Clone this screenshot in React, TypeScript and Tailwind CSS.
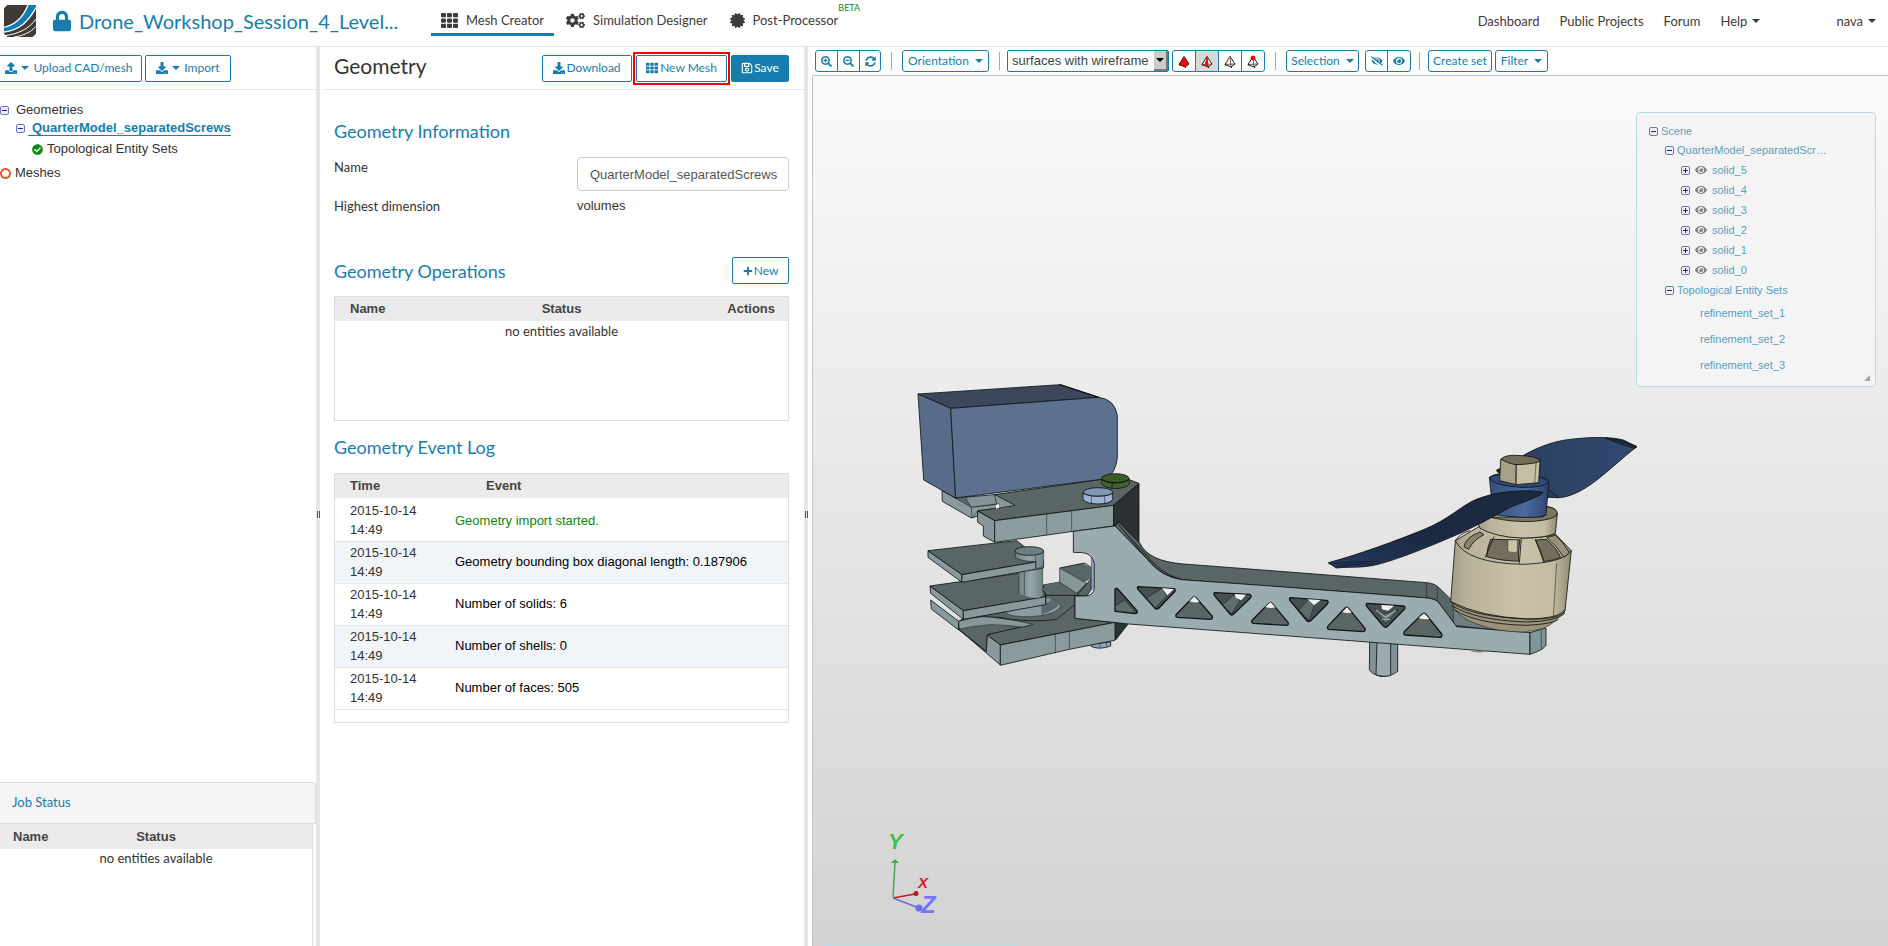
import type { ReactNode } from "react";
import {
  FaCertificate,
  FaCheckCircle,
  FaCogs,
  FaDownload,
  FaEye,
  FaEyeSlash,
  FaLock,
  FaPlus,
  FaRegSave,
  FaSearchMinus,
  FaSearchPlus,
  FaSyncAlt,
  FaTh,
  FaUpload,
} from "react-icons/fa";

const LATO = "font-[Lato,sans-serif]";
const ARIAL = "font-['Liberation_Sans',Arial,sans-serif]";

const EVENTS = [
  { date: "2015-10-14", time: "14:49", text: "Geometry import started.", ok: true },
  { date: "2015-10-14", time: "14:49", text: "Geometry bounding box diagonal length: 0.187906" },
  { date: "2015-10-14", time: "14:49", text: "Number of solids: 6" },
  { date: "2015-10-14", time: "14:49", text: "Number of shells: 0" },
  { date: "2015-10-14", time: "14:49", text: "Number of faces: 505" },
];

const SOLIDS = ["solid_5", "solid_4", "solid_3", "solid_2", "solid_1", "solid_0"];
const SETS = ["refinement_set_1", "refinement_set_2", "refinement_set_3"];

function Caret() {
  return <span className="inline-block border-x-4 border-t-4 border-x-transparent border-t-current" />;
}

function Button({ children, className = "" }: { children: ReactNode; className?: string }) {
  return (
    <button
      type="button"
      className={`flex h-[27px] items-center justify-center rounded-xs border border-[#177dae] text-[12px] whitespace-nowrap ${className}`}
    >
      {children}
    </button>
  );
}

function ToolButton({ children, className = "" }: { children: ReactNode; className?: string }) {
  return (
    <button
      type="button"
      className={`flex h-[22px] items-center justify-center gap-[6px] rounded-[3px] border border-[#177dae] bg-white text-[12px] whitespace-nowrap text-[#177dae] ${className}`}
    >
      {children}
    </button>
  );
}

function ToolGroup({ children }: { children: ReactNode }) {
  return (
    <div className="flex h-[22px] divide-x divide-[#177dae] overflow-hidden rounded-[3px] border border-[#177dae] text-[#177dae]">
      {children}
    </div>
  );
}

function Divider() {
  return <span className="h-[18px] w-px bg-[#b9a58c]" />;
}

function Splitter() {
  return (
    <div className="flex w-1 shrink-0 items-center justify-center bg-[#e6e6e6] pt-9">
      <span className="h-[7px] w-[3px] border-x border-[#555]" />
    </div>
  );
}

function Toggle({ open }: { open?: boolean }) {
  return (
    <svg width="9" height="9" viewBox="0 0 9 9" className="shrink-0">
      <rect x=".5" y=".5" width="8" height="8" rx="1.5" fill="#f1f2fb" stroke="#6b76b5" />
      <path d={open ? "M2 4.5h5" : "M2 4.5h5M4.5 2v5"} stroke="#1c1cc0" />
    </svg>
  );
}

function Logo() {
  return (
    <svg width="32" height="32" viewBox="0 0 96 96" className="shrink-0">
      <path d="M10 0H86L96 10V86L86 96H10L0 86V10Z" fill="#3f3a36" />
      <path d="M0 68C34 60 62 36 74 0H96V6C72 50 44 74 0 80Z" fill="#0a7cb8" />
      <path d="M0 67C32 60 58 36 72 0" fill="none" stroke="#fff" strokeWidth="4" />
      <path d="M0 81C44 76 72 52 96 8" fill="none" stroke="#fff" strokeWidth="4" />
      <path d="M0 92C44 88 76 70 96 42" fill="none" stroke="#fff" strokeWidth="3" />
      <path d="M30 96C58 92 80 82 96 64" fill="none" stroke="#fff" strokeWidth="3" />
    </svg>
  );
}

function Tetra({ mode }: { mode: "volume" | "face" | "edge" | "node" }) {
  return (
    <svg width="12" height="13" viewBox="0 0 12 13" fill="none" stroke="#222" strokeLinejoin="round">
      <path d="M6 1.5L1 9.5L7 12L11 9Z" fill={mode === "volume" ? "#f00" : "#fff"} />
      {mode !== "volume" && <path d="M6 1.5L7 12M1 9.5L11 9" strokeWidth=".7" />}
      {mode === "volume" && <path d="M6 3L3 9L7 11L10 9Z" fill="#f00" stroke="#f00" />}
      {mode === "face" && <path d="M6 3L4 10L7 11.500Z" fill="#f00" stroke="#f00" />}
      {mode === "edge" && <path d="M6 2L2 9" stroke="#f66" />}
      {mode === "node" && <circle cx="6" cy="3" r="2" fill="#f00" stroke="#f00" />}
      <path d="M1 9.5h1M7 12h1" strokeWidth="2" />
    </svg>
  );
}

function Header() {
  return (
    <header className="flex h-[47px] shrink-0 items-start border-b border-[#e6e6e6] pr-3 pl-1 text-[#3f3b39]">
      <div className="flex w-[427px] items-center pt-[5px] text-[#177dae]">
        <Logo />
        <FaLock className="ml-[17px] h-[22px] w-[18px]" />
        <h1 className="ml-2 text-[20px] leading-[32px]">Drone_Workshop_Session_4_Level...</h1>
      </div>
      <nav className="flex text-[13px]">
        <a href="#mesh" className="flex h-9 items-center gap-2 border-b-3 border-[#177dae] px-[10px] pt-2">
          <FaTh className="size-[17px]" />
          Mesh Creator
        </a>
        <a href="#simulation" className="flex h-9 items-center gap-2 border-b-3 border-transparent px-3 pt-2">
          <FaCogs className="size-[19px]" />
          Simulation Designer
        </a>
        <a href="#post" className="flex h-9 items-center gap-2 border-b-3 border-transparent pt-2 pl-[10px]">
          <FaCertificate className="size-[15px]" />
          Post-Processor
        </a>
        <sup className="top-0 pt-[2px] text-[9px] leading-3 text-[#0a8a0a]">BETA</sup>
      </nav>
      <nav className="ml-auto flex items-center gap-5 pt-3 text-[13px] leading-[18px]">
        <a href="#dashboard">Dashboard</a>
        <a href="#projects">Public Projects</a>
        <a href="#forum">Forum</a>
        <button type="button" className="flex items-center gap-[5px]">
          Help <Caret />
        </button>
        <button type="button" className="ml-14 flex items-center gap-[5px]">
          nava <Caret />
        </button>
      </nav>
    </header>
  );
}

function Sidebar() {
  return (
    <aside className="flex w-[316px] shrink-0 flex-col">
      <div className="flex h-[43px] shrink-0 items-center gap-[3px] overflow-hidden border-b border-[#e6e6e6] text-[#177dae]">
        <Button className="-ml-1 w-[146px] gap-1">
          <FaUpload className="size-3" />
          <Caret /> Upload CAD/mesh
        </Button>
        <Button className="w-[86px] gap-1">
          <FaDownload className="size-3" />
          <Caret /> Import
        </Button>
      </div>
      <ul className={`grow pt-[11px] text-[13px] text-[#333] ${ARIAL}`}>
        <li>
          <div className="flex h-[18px] items-center gap-[7px]">
            <Toggle open /> Geometries
          </div>
          <ul className="pl-4">
            <li>
              <div className="flex h-[18px] items-center gap-[3px]">
                <Toggle open />
                <a href="#geometry" className="border-b border-[#177dae] pl-1 leading-[15px] font-bold text-[#177dae]">
                  QuarterModel_separatedScrews
                </a>
              </div>
              <div className="flex h-[24px] items-center gap-1 pl-4">
                <FaCheckCircle className="size-[11px] text-[#0b8a0b]" /> Topological Entity Sets
              </div>
            </li>
          </ul>
        </li>
        <li className="flex h-[24px] items-center gap-1">
          <span className="size-[11px] rounded-full border-2 border-[#e8562a]" /> Meshes
        </li>
      </ul>
      <section className="h-[164px] shrink-0">
        <h2 className="flex h-[42px] items-center rounded-tr border-t border-r border-b border-[#dcdcdc] bg-[#f5f5f5] pl-3 text-[13px] text-[#177dae]">
          Job Status
        </h2>
        <div className="mr-[3px] h-[122px] border-r border-[#dcdcdc]">
          <table className="w-full table-fixed text-[13px]">
            <thead className={`bg-[#ebebeb] text-[#444] ${ARIAL}`}>
              <tr className="h-[25px]">
                <th className="pl-[13px] text-left">Name</th>
                <th>Status</th>
                <th />
              </tr>
            </thead>
            <tbody>
              <tr>
                <td colSpan={3} className="text-center leading-[18px] text-[#333]">
                  no entities available
                </td>
              </tr>
            </tbody>
          </table>
        </div>
      </section>
    </aside>
  );
}

function Geometry() {
  return (
    <main className="w-[484px] shrink-0 text-[#333]">
      <div className="ml-1 flex h-[43px] items-center border-b border-[#e6e6e6] pr-[15px] pl-[10px]">
        <h2 className="mr-auto pb-1 text-[21px]">Geometry</h2>
        <div className="flex gap-1">
          <Button className="w-[90px] gap-px text-[#177dae]">
            <FaDownload className="size-3" /> Download
          </Button>
          <div className="outline-2 outline-offset-1 outline-[#f00]">
            <Button className="w-[91px] gap-0.5 text-[#177dae]">
              <FaTh className="size-3" /> New Mesh
            </Button>
          </div>
          <Button className="w-[58px] gap-px bg-[#177dae] text-white">
            <FaRegSave className="size-3" /> Save
          </Button>
        </div>
      </div>
      <div className="pr-[15px] pl-[14px]">
        <h3 className="pt-7 text-[18px] leading-[26px] text-[#177dae]">Geometry Information</h3>
        <div className="grid grid-cols-[243px_1fr] gap-y-[5px] pt-[13px] text-[13px] leading-[20px]">
          <label htmlFor="geometry-name">Name</label>
          <input
            id="geometry-name"
            defaultValue="QuarterModel_separatedScrews"
            className={`h-[34px] w-full rounded border border-[#ccc] pl-3 text-[#555] ${ARIAL}`}
          />
          <span>Highest dimension</span>
          <span className={ARIAL}>volumes</span>
        </div>
        <div className="flex items-center justify-between pt-[41px] text-[#177dae]">
          <h3 className="text-[18px] leading-[26px]">Geometry Operations</h3>
          <Button className="w-[57px] gap-px">
            <FaPlus className="size-[10px]" /> New
          </Button>
        </div>
        <div className="mt-3 h-[125px] border border-[#ddd]">
          <table className="w-full table-fixed text-[13px]">
            <thead className={`bg-[#ebebeb] text-[#444] ${ARIAL}`}>
              <tr className="h-6">
                <th className="pl-[15px] text-left">Name</th>
                <th>Status</th>
                <th className="pr-[13px] text-right">Actions</th>
              </tr>
            </thead>
            <tbody>
              <tr>
                <td colSpan={3} className="pt-px text-center leading-[18px]">
                  no entities available
                </td>
              </tr>
            </tbody>
          </table>
        </div>
        <h3 className="py-[13px] text-[18px] leading-[26px] text-[#177dae]">Geometry Event Log</h3>
        <div className="h-[250px] border border-[#ddd]">
          <table className={`w-full text-[13px] ${ARIAL}`}>
            <thead className="bg-[#ebebeb] text-[#444]">
              <tr className="h-[25px] border-b-2 border-white">
                <th className="w-[120px] pl-[15px] text-left">Time</th>
                <th className="pl-[31px] text-left">Event</th>
              </tr>
            </thead>
            <tbody>
              {EVENTS.map((e) => (
                <tr key={e.text} className="border-y border-[#e6e6e6] even:bg-[#f1f5fa]">
                  <td className="h-[42px] pl-[15px] leading-[19px]">
                    {e.date}
                    <br />
                    {e.time}
                  </td>
                  <td className={e.ok ? "text-[#0a8a0a]" : "text-black"}>{e.text}</td>
                </tr>
              ))}
            </tbody>
          </table>
        </div>
      </div>
    </main>
  );
}

function Toolbar() {
  return (
    <div className="flex h-7 items-center pl-[3px]">
      <ToolGroup>
        <button type="button" aria-label="Zoom in" className="flex w-[22px] items-center justify-center">
          <FaSearchPlus className="size-[11px]" />
        </button>
        <button type="button" aria-label="Zoom out" className="flex w-[22px] items-center justify-center">
          <FaSearchMinus className="size-[11px]" />
        </button>
        <button type="button" aria-label="Reset view" className="flex w-5 items-center justify-center">
          <FaSyncAlt className="size-[11px]" />
        </button>
      </ToolGroup>
      <div className="ml-[10px] flex items-center gap-[10px]">
        <Divider />
        <ToolButton className="w-[87px]">
          Orientation <Caret />
        </ToolButton>
        <Divider />
      </div>
      <div className="relative ml-[7px]">
        <select
          aria-label="Render mode"
          className={`block h-[22px] w-[162px] appearance-none rounded-xs border border-[#177dae] bg-white pl-1 text-[13px] text-[#444] ${ARIAL}`}
        >
          <option>surfaces with wireframe</option>
        </select>
        <span className="pointer-events-none absolute top-px right-px flex h-5 w-[14px] items-center justify-center border-r-2 border-b-2 border-[#777] bg-[#ccc] text-black">
          <Caret />
        </span>
      </div>
      <div className="ml-[3px] flex items-center gap-[10px]">
        <ToolGroup>
          <button type="button" aria-label="Pick volumes" className="flex w-[23px] items-center justify-center">
            <Tetra mode="volume" />
          </button>
          <button type="button" aria-label="Pick faces" className="flex w-[23px] items-center justify-center bg-[#d8d8d8]">
            <Tetra mode="face" />
          </button>
          <button type="button" aria-label="Pick edges" className="flex w-[23px] items-center justify-center">
            <Tetra mode="edge" />
          </button>
          <button type="button" aria-label="Pick nodes" className="flex w-[22px] items-center justify-center">
            <Tetra mode="node" />
          </button>
        </ToolGroup>
        <Divider />
        <ToolButton className="w-[73px]">
          Selection <Caret />
        </ToolButton>
      </div>
      <div className="ml-[6px] flex items-center gap-2">
        <ToolGroup>
          <button type="button" aria-label="Hide" className="flex w-[22px] items-center justify-center">
            <FaEyeSlash className="size-3" />
          </button>
          <button type="button" aria-label="Show" className="flex w-[22px] items-center justify-center">
            <FaEye className="size-3" />
          </button>
        </ToolGroup>
        <Divider />
        <div className="flex gap-[3px]">
          <ToolButton className="w-[64px]">Create set</ToolButton>
          <ToolButton className="w-[53px]">
            Filter <Caret />
          </ToolButton>
        </div>
      </div>
    </div>
  );
}

// truss cut-outs: outline, the lit inner wall and the see-through tip
const HOLES = [
  { d: "M645 657Q650 652 656 660L711 722Q714 731 705 731L645 724Z", inner: "M645 708L674 690L709 729L647 723Z" },
  { d: "M715 650L822 656Q829 659 823 666L776 715Q769 721 763 713L714 658Q710 650 715 650Z", gap: "M786 655L822 657L802 676Z", inner: "M786 655L800 678L766 714L740 684Z" },
  { d: "M878 683Q883 677 889 684L936 738Q940 747 932 748L832 742Q824 739 830 732Z", gap: "M868 694L883 679L898 695Q883 700 868 694Z" },
  { d: "M945 668L1049 673Q1057 677 1051 684L1000 733Q994 738 989 731L943 676Q940 668 945 668Z", gap: "M1004 672L1038 674L1024 691L1008 684Z", inner: "M1005 672L1020 693L994 732L968 704Z" },
  { d: "M1107 700Q1112 694 1117 701L1164 757Q1167 766 1159 766L1060 760Q1052 757 1057 750Z", gap: "M1096 711L1111 696L1126 712Q1111 716 1096 711Z" },
  { d: "M1172 683L1280 691Q1288 694 1282 702L1232 752Q1225 758 1219 750L1170 692Q1166 685 1172 683Z", gap: "M1222 688L1262 690L1242 706Z", inner: "M1224 690L1242 706L1228 752L1196 720Z" },
  { d: "M1335 714Q1340 708 1346 715L1395 775Q1398 783 1390 785L1286 778Q1279 774 1285 767Z", gap: "M1327 726L1341 712L1355 727Q1341 731 1327 726Z" },
  { d: "M1402 700L1510 708Q1519 711 1513 718L1463 769Q1457 775 1450 768L1400 709Q1396 702 1402 700Z", gap: "M1444 705L1482 707L1464 722L1446 718Z", inner: "M1426 716L1448 734L1482 722L1494 718L1457 762Z" },
  { d: "M1567 732Q1573 726 1578 733L1625 792Q1628 801 1620 802L1515 795Q1508 791 1514 784Z", gap: "M1556 744L1572 730L1588 746Q1572 750 1556 744Z" },
];

function Model() {
  return (
    <svg
      className="absolute inset-0 size-full"
      viewBox="813 76 1075 870"
      preserveAspectRatio="xMidYMid slice"
      role="img"
      aria-label="Quarter model of a drone arm"
    >
      <defs>
        <linearGradient id="can" x1="0" x2="1">
          <stop offset="0" stopColor="#a39c86" />
          <stop offset=".15" stopColor="#b9b199" />
          <stop offset=".55" stopColor="#c9c2a8" />
          <stop offset=".85" stopColor="#c3bca2" />
          <stop offset="1" stopColor="#8f8973" />
        </linearGradient>
        <linearGradient id="hub" x1="0" x2="1">
          <stop offset="0" stopColor="#33507f" />
          <stop offset=".6" stopColor="#4b6a9e" />
          <stop offset="1" stopColor="#2c4672" />
        </linearGradient>
        <linearGradient id="pin" x1="0" x2="1">
          <stop offset="0" stopColor="#6f8083" />
          <stop offset=".5" stopColor="#96a8ab" />
          <stop offset="1" stopColor="#6f8184" />
        </linearGradient>
        <linearGradient id="blade" x1="1" y1="0" x2="0" y2="1">
          <stop offset="0" stopColor="#1c2a41" />
          <stop offset=".6" stopColor="#1b2a43" />
          <stop offset="1" stopColor="#263b60" />
        </linearGradient>
        <linearGradient id="farblade" x1="0" x2="1">
          <stop offset="0" stopColor="#2b4060" />
          <stop offset="1" stopColor="#324a72" />
        </linearGradient>
      </defs>

      <g transform="translate(900 370) scale(.333333)" stroke="#101516" strokeWidth="2.5" strokeLinejoin="round">
        {/* lower plates */}
        <path d="M572 822L632 816V828Q600 840 575 830Z" fill="#8ba3c4" />
        <path d="M600 822V834M620 820V830" fill="none" strokeWidth="1.5" />
        <path d="M645 757L686 760L647 810Z" fill="#2b3233" />
        <path d="M92 690L176 754V780L94 717Z" fill="#8a9a9c" />
        <path d="M430 645L480 636L560 640L525 705L525 745L645 757L301 825L262 796L300 780L176 754L190 745L436 705Z" fill="#5a6566" />
        <path d="M176 754L250 740L290 742L394 764L262 794L260 845L176 778Z" fill="#5a6566" />
        <path d="M176 754Q215 742 250 740Q320 744 400 763L366 771Q300 764 270 764Q220 768 178 777Z" fill="#87979a" strokeWidth="1.5" />
        <path d="M290 741Q390 760 470 748L524 704" fill="none" />
        <path d="M314 726Q330 742 390 740Q470 736 483 708Q475 690 440 684L380 690Z" fill="#8a9c9f" stroke="none" />
        <path d="M314 726Q330 742 390 740Q470 736 483 708Q475 692 455 687" fill="none" strokeWidth="1.5" />
        <path d="M424 700Q450 698 455 686L480 700Q470 718 424 735Z" fill="#59696c" stroke="none" />
        <path d="M479 594L548 580L576 594V625L550 638L528 672L430 676L434 644L479 635Z" fill="#5a6566" stroke="none" />
        <path d="M479 594L554 579L576 594" fill="none" />
        <path d="M479 594L560 640L530 670L479 636Z" fill="#879799" strokeWidth="1.5" />
        <path d="M432 676H525V706" fill="none" />
        <path d="M530 676L574 626V658L560 678Z" fill="#5a6566" />
        <path d="M176 778L301 885V825L262 796L259 845Z" fill="#8a9a9c" />
        <path d="M301 825L645 757V811L508 838L301 886Z" fill="#8a9b9d" />
        <path d="M466 792V850M508 784V838" fill="none" strokeWidth="1.5" />

        {/* middle plates and pin */}
        <path d="M90 648L190 722V748L92 670Z" fill="#8a9a9c" />
        <path d="M90 648L356 610L436 668V681L190 722Z" fill="#5a6566" />
        <path d="M190 722L437 680V704L190 748Z" fill="#8a9a9c" />
        <path d="M354 600L428 590V664Q436 690 390 682L356 672Z" fill="url(#pin)" stroke="none" />
        <path d="M356 610V672M373 606V676M428 588V662M428 662Q440 672 437 700" fill="none" strokeWidth="1.5" />
        <path d="M84 542L186 614V637L84 562Z" fill="#8a9a9c" />
        <path d="M84 542L350 512L428 572L186 614Z" fill="#5a6566" />
        <path d="M186 614L430 572V594L186 637Z" fill="#8a9a9c" />
        <path d="M346 544V562Q360 574 408 575V598L431 588V542Z" fill="url(#pin)" strokeWidth="1.5" />
        <ellipse cx="388" cy="543" rx="43" ry="13" fill="#6c8083" />
        <path d="M407 556V596" strokeWidth="1.5" />

        {/* upper clamp */}
        <path d="M126 362L166 384L342 370L344 406L214 444L127 394Z" fill="#8a9a9c" />
        <path d="M166 384L200 380L214 412L290 402L300 372L344 406L284 452L233 423L214 412Z" fill="#5a6566" strokeWidth="1.5" />
        <path d="M200 382L284 374L290 402L214 412L200 390Z" fill="#849496" strokeWidth="1.5" />
        <path d="M214 412L286 404L288 416L234 422L216 444Z" fill="#8a9a9c" strokeWidth="1.5" />
        <path d="M284 374L604 328L690 330L717 340L641 406L284 452L233 423L344 406Z" fill="#5a6566" />
        <path d="M284 374L290 402L298 402V414L344 406Z" fill="#87979a" strokeWidth="1.5" />
        <path d="M286 405L298 402V413L288 416Z" fill="#eee" stroke="none" />
        <path d="M233 423L284 452V517L250 498V468L233 457Z" fill="#87979a" />
        <path d="M284 452L641 406V468L520 484L284 517Z" fill="#8c9da0" />
        <path d="M440 432V494M515 423V484" fill="none" strokeWidth="1.5" />
        <path d="M641 406L717 340V520L690 510L641 468Z" fill="#2b3132" />

        {/* battery */}
        <path d="M54 72L480 44L596 82L152 115Z" fill="#3c475b" />
        <path d="M54 72L152 115L167 384L71 330Z" fill="#596b8a" />
        <path d="M152 115L596 82Q644 88 652 136V262Q648 306 620 326L167 384Z" fill="#5c7090" />
        <path d="M480 44L596 82" strokeWidth="4" />
        <path d="M605 328V342Q615 354 646 356Q680 354 688 342V328Z" fill="#42632f" />
        <ellipse cx="646" cy="325" rx="41" ry="14" fill="#3a5a26" />
        <path d="M605 328Q620 338 650 338Q680 336 688 328M636 337V355" fill="none" />
        <path d="M549 368V388Q560 402 594 402Q630 402 638 388V368Z" fill="#9db4d6" />
        <ellipse cx="594" cy="366" rx="44" ry="13" fill="#8196b5" />
        <path d="M549 370Q565 378 594 378Q630 377 638 370M574 378V400M614 378V400" fill="none" strokeWidth="1.5" />

        {/* arm */}
        <path d="M645 468L656 456L720 520Q745 574 850 582L1140 604L1580 638Q1606 640 1620 656L1680 715L1800 780L1670 770L1614 695Q1600 684 1570 683L845 629Q790 618 760 588Z" fill="#5a6566" />
        <path d="M652 460Q690 505 735 548Q780 610 845 629L792 612Q760 595 740 568Z" fill="#3f4a4b" strokeWidth="1.5" />
        <path d="M1660 700V765L1800 782V740L1700 715Z" fill="#6f7e80" strokeWidth="1.5" />
        <path d="M1580 638V684M1612 652V692" fill="none" strokeWidth="1.5" />
        <path d="M1409 816L1493 820V904Q1470 922 1440 919Q1415 912 1408 900Z" fill="#7f9193" />
        <path d="M1431 816H1472V917Q1450 922 1428 915Z" fill="#9bacb0" />
        <path
          d="M520 484L645 468L740 566Q785 622 845 629L1140 650L1570 683Q1600 684 1614 695L1670 770L1890 788V853L1140 796L686 762L525 745V678H560Q580 675 583 655V580Q575 550 548 548L520 547Z"
          fill="#9bacb0"
        />
        <path d="M574 562Q580 570 580 582V655L574 660Z" fill="#8fa8cf" strokeWidth="1" />
        <path d="M1890 788L1938 774V826Q1930 840 1890 853Z" fill="#82969a" />
        <path d="M1924 780V838" strokeWidth="1.5" />
        <path d="M1712 841Q1730 848 1756 843" fill="none" stroke="#8f8973" strokeWidth="5" />
        {HOLES.map((h) => (
          <g key={h.d}>
            <path d={h.d} fill={h.inner ? "#465052" : "#5a6566"} strokeWidth="4" />
            {h.inner && <path d={h.inner} fill="#5f6c6d" strokeWidth="1.5" />}
            {h.gap && <path d={h.gap} fill="#f0f0f0" stroke="none" />}
          </g>
        ))}
        <path d="M1428 720L1457 742L1488 720M1446 748H1470" fill="none" stroke="#9bacb0" strokeWidth="4" />
      </g>

      {/* motor and propeller */}
      <g transform="translate(1280 420) scale(.333333)" stroke="#12110d" strokeWidth="2.5" strokeLinejoin="round">
        <path d="M730 106C780 78 830 60 890 56C950 50 1000 52 1030 60L1071 80C1030 110 980 160 930 195C890 222 860 232 835 233L800 205Z" fill="url(#farblade)" />
        <path d="M975 54Q1020 72 1060 84L1071 80L1020 60Z" fill="#1d2d48" />
        <path d="M800 232L835 233L800 205Z" fill="#2b4060" />
        <path d="M516 545Q525 590 590 612Q650 636 730 636Q800 630 822 605L855 575Z" fill="#9a927a" strokeWidth="1.5" />
        <path d="M526 362L600 318Q650 350 724 354Q790 355 826 342L874 392L855 572Q840 600 740 597Q600 590 512 545Z" fill="url(#can)" />
        <path d="M526 362Q560 430 730 433Q850 428 874 392" fill="none" />
        <path d="M552 380Q556 352 600 336L612 344Q580 360 566 388Z" fill="#8a846e" />
        <path d="M632 358L720 360Q714 400 716 424Q660 422 620 410Q622 380 632 358Z" fill="#736e5b" />
        <path d="M684 360H712V396Q696 400 684 394Z" fill="#cbc4aa" strokeWidth="1" />
        <path d="M766 360L800 358Q830 384 842 412Q820 422 792 424Q784 390 766 360Z" fill="#736e5b" />
        <path d="M800 352L826 346Q850 366 868 398L852 412Q830 376 800 352Z" fill="#9a937c" />
        <path d="M526 362Q540 340 570 332M642 350L616 412M724 356L718 430M766 358L792 428" fill="none" />
        <path d="M590 300L600 325Q650 352 724 354Q800 354 826 340L832 282Q830 262 800 260H640Z" fill="url(#can)" />
        <path d="M632 292Q700 308 760 304Q832 298 832 280Q830 264 800 260L790 290Z" fill="#7b7561" />
        <path d="M512 545Q570 590 740 597Q840 596 855 568M516 556Q580 600 740 606Q830 604 855 580M524 570Q590 612 740 616Q820 612 836 598" fill="none" />
        <path d="M830 430L820 590" fill="none" strokeWidth="1.5" />

        <path d="M628 172Q640 158 720 158Q806 170 806 190L798 285Q770 300 640 284Z" fill="url(#hub)" />
        <path d="M628 174Q650 158 720 160Q806 172 806 186Q790 204 720 202Q640 196 628 174Z" fill="#2f4a7b" />
        <path d="M650 150L662 145V160L652 156Z" fill="#1b2a44" />
        <path d="M662 118L709 134L708 194L659 182Z" fill="#a8a189" />
        <path d="M709 134L780 124L776 188L708 194Z" fill="#c6bfa5" />
        <path d="M664 116Q680 104 710 106Q770 108 781 122Q770 132 709 134Q680 130 664 116Z" fill="#736d59" />
        <path d="M768 128L764 190" strokeWidth="1.5" />
        <path
          d="M145 428C250 400 380 350 440 325C520 290 550 250 600 234C660 212 750 208 788 217C790 226 740 242 690 262C640 290 600 312 540 340C460 375 350 420 290 434C250 444 210 440 168 444Z"
          fill="url(#blade)"
        />
        <path d="M145 432Q230 424 300 424M170 440Q220 430 280 432" fill="none" stroke="#0b1220" strokeWidth="2" />
      </g>

      {/* axis triad */}
      <g strokeWidth="1.5" fontFamily="Liberation Sans" fontStyle="italic" fontWeight="bold">
        <path d="M893 897L895 863" stroke="#3fa94b" />
        <path d="M891 863L895 859L899 863Z" fill="#3fa94b" />
        <path d="M893 898L915 894" stroke="#b81c1c" />
        <circle cx="916" cy="893.500" r="2.500" fill="#b81c1c" />
        <path d="M893 898L919 908" stroke="#6c6ce0" />
        <circle cx="919" cy="908" r="3.500" fill="#6c6cf0" />
        <text x="888" y="849" fontSize="22" fill="#3fbf43">
          Y
        </text>
        <text x="918" y="888" fontSize="15" fill="#e01818">
          X
        </text>
        <text x="921" y="913" fontSize="24" fill="#7474ff">
          Z
        </text>
      </g>
    </svg>
  );
}

function ScenePanel() {
  return (
    <div
      className={`absolute top-9 right-3 h-[275px] w-[240px] rounded border border-[#b4dde7] bg-[#f4f4f4] pt-[9px] pl-3 text-[11px] text-[#5b9fc2] ${ARIAL}`}
    >
      <div className="flex h-[18px] items-center gap-[3px]">
        <Toggle open /> Scene
      </div>
      <div className="flex h-5 items-center gap-[3px] pl-4">
        <Toggle open /> QuarterModel_separatedScr…
      </div>
      <ul className="pl-8">
        {SOLIDS.map((s) => (
          <li key={s} className="flex h-5 items-center">
            <Toggle />
            <FaEye className="mx-[5px] size-3 text-[#84847a]" />
            {s}
          </li>
        ))}
      </ul>
      <div className="flex h-5 items-center gap-[3px] pl-4">
        <Toggle open /> Topological Entity Sets
      </div>
      <ul className="pl-[51px]">
        {SETS.map((s) => (
          <li key={s} className="flex h-[26px] items-center">
            {s}
          </li>
        ))}
      </ul>
      <svg width="6" height="6" viewBox="0 0 6 6" className="absolute right-[5px] bottom-[5px]">
        <path d="M6 0V6H0Z" fill="#a5a5a5" />
      </svg>
    </div>
  );
}

export default function App() {
  return (
    <div className={`flex h-screen flex-col overflow-hidden bg-white ${LATO}`}>
      <Header />
      <div className="flex min-h-0 grow">
        <Sidebar />
        <Splitter />
        <Geometry />
        <Splitter />
        <section className="flex min-w-0 grow flex-col pl-1">
          <Toolbar />
          <div className="relative grow border-t border-l border-[#c4c4c4] bg-linear-to-b from-[#fafafa] to-[#d3d3d3]">
            <Model />
            <ScenePanel />
            <div className="absolute bottom-0 left-[11px] h-px w-[196px] bg-[#b9dbe6]" />
          </div>
        </section>
      </div>
    </div>
  );
}
